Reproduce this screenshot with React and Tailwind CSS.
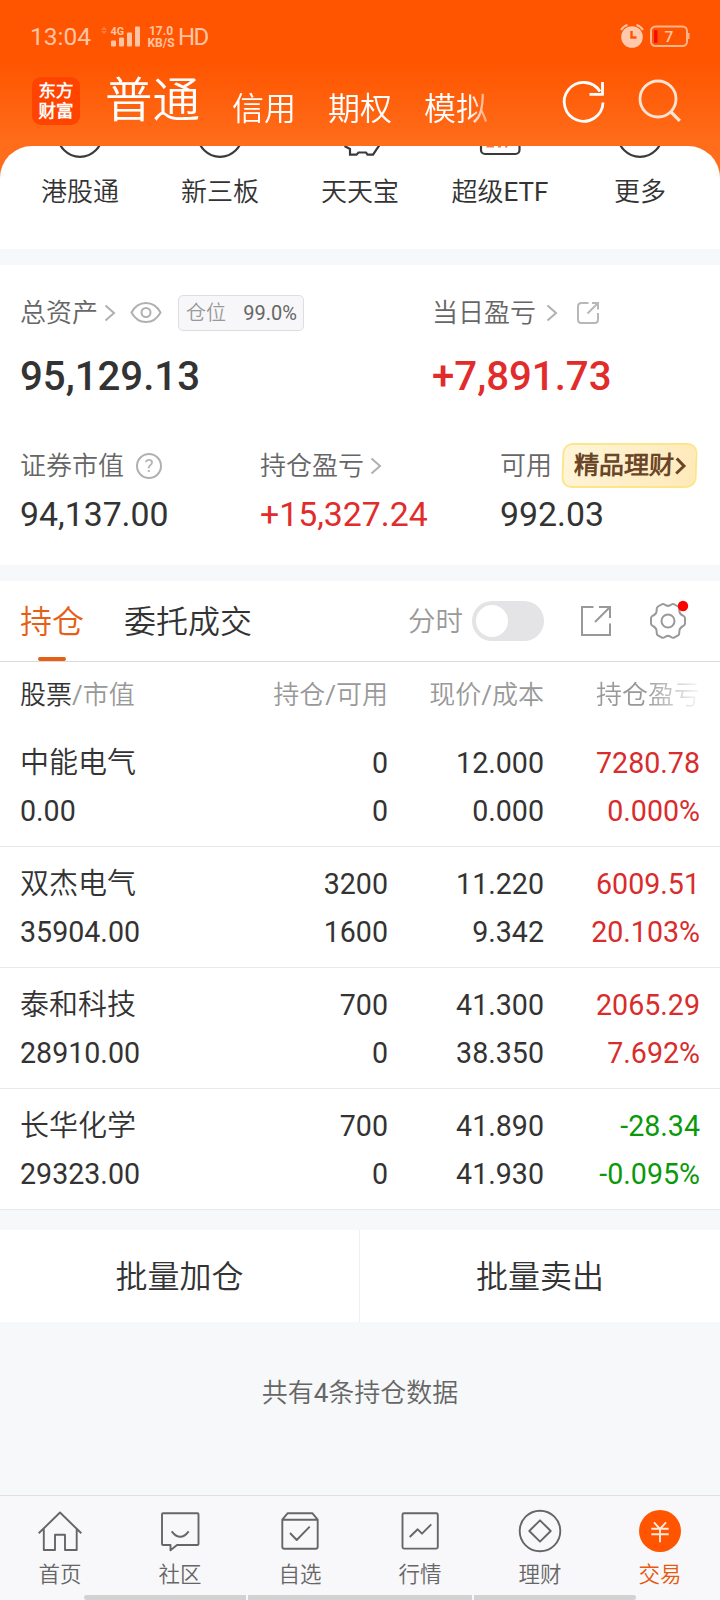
const ACTIONS = [
  { label: '港股通', icon: 'circle' },
  { label: '新三板', icon: 'circle' },
  { label: '天天宝', icon: 'pig' },
  { label: '超级ETF', icon: 'etf' },
  { label: '更多', icon: 'circle' },
];

const HOLDINGS = [
  { name: '中能电气', value: '0.00', held: '0', free: '0', price: '12.000', cost: '0.000', pnl: '7280.78', pct: '0.000%', up: true },
  { name: '双杰电气', value: '35904.00', held: '3200', free: '1600', price: '11.220', cost: '9.342', pnl: '6009.51', pct: '20.103%', up: true },
  { name: '泰和科技', value: '28910.00', held: '700', free: '0', price: '41.300', cost: '38.350', pnl: '2065.29', pct: '7.692%', up: true },
  { name: '长华化学', value: '29323.00', held: '700', free: '0', price: '41.890', cost: '41.930', pnl: '-28.34', pct: '-0.095%', up: false },
];

function Chevron({ className }) {
  return (
    <svg className={className} width="12" height="18" viewBox="0 0 12 18" fill="none" stroke="#b0b0b0" strokeWidth="2">
      <path d="M1.500 1.500 10 9l-8.500 7.500" />
    </svg>
  );
}

function StatusBar() {
  return (
    <div className="flex h-[72px] items-center pl-[30px] pr-[30px] pt-[1px] text-[#ffc4a4]">
      <span className="w-[64px] text-[24.500px] leading-[36px]">13:04</span>
      <svg className="ml-[6px]" width="42" height="26" viewBox="0 0 42 26" fill="currentColor">
        <path d="M4 2.500 7 6H1zM4 10 1 7h6z" opacity=".35" />
        <rect x="11" y="16.500" width="5" height="6" rx="1" />
        <rect x="19" y="13.500" width="5" height="9" rx="1" />
        <rect x="27" y="8.500" width="5" height="14" rx="1" />
        <rect x="35" y="2.500" width="5" height="20" rx="1" />
        <text x="10.500" y="10.500" fontSize="10.800" fontWeight="700" fontFamily="Roboto, sans-serif">4G</text>
      </svg>
      <div className="ml-[4px] flex w-[30px] flex-col items-center text-[12px] font-bold leading-[12px]">
        <span>17.0</span>
        <span>KB/S</span>
      </div>
      <span className="ml-[2px] text-[24px] leading-[36px] tracking-[-1.500px]">HD</span>
      <svg className="ml-auto" width="72" height="28" viewBox="0 0 72 28" fill="none">
        <circle cx="14" cy="14" r="10.800" fill="#ffc9ae" />
        <path d="M13.500 8v6.500h5" stroke="#ff5500" strokeWidth="2.400" />
        <path d="M3 7Q5.500 3 9.500 2M18.500 2Q22.500 3 25 7" stroke="#ffc4a4" strokeWidth="2" />
        <rect x="33" y="3.500" width="36" height="19.500" rx="4.500" stroke="#ffb48c" strokeWidth="2" />
        <path d="M69 10h2.500v6H69z" fill="#ffb48c" />
        <rect x="36" y="7" width="3.500" height="13" rx="1" fill="#f80b0b" />
        <text x="46.500" y="18.500" fontSize="15.500" fontWeight="500" fill="#ffc4a4" fontFamily="Roboto, sans-serif">7</text>
      </svg>
    </div>
  );
}

function Header() {
  return (
    <header className="h-[180px] bg-[linear-gradient(180deg,#ff5500_0px,#ff5500_62px,#ff6d1b_146px,#ff6d1b_180px)]">
      <StatusBar />
      <div className="flex h-[74px] items-start pl-8">
        <div className="mt-[5px] flex h-12 w-12 flex-col items-center justify-center rounded-[9px] bg-[#ff4400] text-[17.500px] font-bold leading-[20px] text-white">
          <span>东方</span>
          <span>财富</span>
        </div>
        <div className="ml-[25px] flex h-[70px] w-[390px] text-white [mask-image:linear-gradient(90deg,#000_365px,transparent_395px)]">
          <span className="mt-[2px] w-[95px] whitespace-nowrap text-[47.500px] leading-[54px]">普通</span>
          <span className="ml-[32px] mt-[17px] w-16 text-[32px] leading-[40px]">信用</span>
          <span className="ml-[32px] mt-[17px] w-16 text-[32px] leading-[40px]">期权</span>
          <span className="ml-[32px] mt-[17px] w-16 text-[32px] leading-[40px]">模拟</span>
        </div>
        <svg className="ml-[63px] mt-[4px]" width="52" height="52" viewBox="0 0 52 52" fill="none" stroke="#fff" strokeWidth="2.800">
          <path d="M45 26.500A19.400 19.400 0 1 1 42 15.500" />
          <path d="M44.500 6v12.300H31.500" />
        </svg>
        <svg className="ml-[24px] mt-[4px]" width="52" height="52" viewBox="0 0 52 52" fill="none" stroke="#ffe3d3" strokeWidth="2.800">
          <circle cx="24" cy="23" r="18" />
          <path d="m36.500 35.500 9.300 9.300" strokeWidth="3.200" />
        </svg>
      </div>
    </header>
  );
}

function ActionIcon({ kind }) {
  return (
    <svg width="60" height="14" viewBox="0 0 60 14" fill="none" stroke="#3a3a3a" strokeWidth="2.200">
      {kind === 'circle' && <circle cx="30" cy="-11.500" r="22.300" />}
      {kind === 'pig' && <path d="M14.500 0 20 3v5.700h6.500L28.500 6.500h7.500l1.500 2.200h5.500L49.500-1" />}
      {kind === 'etf' && (
        <>
          <rect x="11" y="-25" width="38.500" height="33" rx="4" />
          <path d="M16.500 0h7.500M28 0h3M35 0h2.500" stroke="#f4794a" strokeWidth="3" />
        </>
      )}
    </svg>
  );
}

function Actions() {
  return (
    <section className="-mt-[34px] flex h-[103px] overflow-hidden rounded-t-[32px] bg-white px-[10px]">
      {ACTIONS.map((a) => (
        <div key={a.label} className="flex w-[140px] flex-col items-center">
          <ActionIcon kind={a.icon} />
          <span className="mt-[14px] whitespace-nowrap text-[26px] leading-[36px]">{a.label}</span>
        </div>
      ))}
    </section>
  );
}

function Assets() {
  return (
    <section className="mt-4 h-[300px] bg-white px-5 pt-[29px] text-[#666]">
      <div className="flex">
        <div className="w-[412px]">
          <div className="flex h-[37px] items-center text-[26px] leading-[36px]">
            <span>总资产</span>
            <Chevron className="ml-[6px]" />
            <svg className="ml-[14px]" width="32" height="24" viewBox="0 0 32 24" fill="none" stroke="#b0b0b0" strokeWidth="2">
              <path d="M1.500 11.500C5 5 10.500 2 16 2S27 5 30.500 11.500C27 18 21.500 21 16 21S5 18 1.500 11.500z" />
              <circle cx="16" cy="11.500" r="4.500" />
            </svg>
            <div className="ml-[16px] flex h-9 w-[126px] items-center justify-between rounded-[5px] border border-[#dedee2] bg-[#f7f7fa] pl-[7px] pr-[6px] text-[20px] leading-[34px]">
              <span className="text-[#999]">仓位</span>
              <span>99.0%</span>
            </div>
          </div>
          <div className="mt-[22px] text-[40.200px] font-medium leading-[48px] text-[#333]">95,129.13</div>
        </div>
        <div>
          <div className="flex h-[37px] items-center text-[26px] leading-[36px]">
            <span>当日盈亏</span>
            <Chevron className="ml-[10px]" />
            <svg className="ml-[17px]" width="26" height="26" viewBox="0 0 26 26" fill="none" stroke="#b8b8b8" strokeWidth="2">
              <path d="M13.500 3H6.500Q3 3 3 6.500v13Q3 23 6.500 23h13Q23 23 23 19.500V13M12.500 13.500 23 3M17 3h6v6.500" />
            </svg>
          </div>
          <div className="mt-[22px] text-[40.200px] font-medium leading-[48px] text-[#e22c2c]">+7,891.73</div>
        </div>
      </div>
      <div className="mt-[41px] flex">
        <div className="w-[240px]">
          <div className="flex h-12 items-center text-[26px]">
            <span>证券市值</span>
            <span className="ml-[12px] flex h-[26px] w-[26px] items-center justify-center rounded-full border-2 border-[#b0b0b0] text-[19px] leading-[22px] text-[#b0b0b0]">?</span>
          </div>
          <div className="mt-[5px] text-[33.800px] leading-[40px] text-[#333]">94,137.00</div>
        </div>
        <div className="w-[240px]">
          <div className="flex h-12 items-center text-[26px]">
            <span>持仓盈亏</span>
            <Chevron className="ml-[6px]" />
          </div>
          <div className="mt-[5px] text-[33.800px] leading-[40px] text-[#e22c2c]">+15,327.24</div>
        </div>
        <div className="w-[200px]">
          <div className="flex h-12 items-center text-[26px]">
            <span className="whitespace-nowrap">可用</span>
            <div className="mb-[1px] ml-[10px] flex h-[45px] w-[135px] shrink-0 -skew-x-2 items-center rounded-[10px] border-2 border-[#fde68a] bg-[linear-gradient(110deg,#fff5da,#ffe9b8)] pl-[10px]">
              <span className="mt-[1px] whitespace-nowrap text-[25px] font-bold text-[#6b4528]">精品理财</span>
              <svg className="ml-[1px]" width="12" height="20" viewBox="0 0 12 20" fill="none" stroke="#6b4528" strokeWidth="3">
                <path d="m1.500 2.500 7.500 7.500-7.500 7.500" />
              </svg>
            </div>
          </div>
          <div className="mt-[5px] text-[33.800px] leading-[40px] text-[#333]">992.03</div>
        </div>
      </div>
    </section>
  );
}

function TabBar() {
  return (
    <div className="flex h-[81px] items-center border-b border-[#dcdcdc] pl-5">
      <div className="flex h-[80px] flex-col items-center text-[#e65f17]">
        <span className="h-[76px] text-[32px] leading-[82px]">持仓</span>
        <span className="h-1 w-7 rounded-full bg-[#e65f17]" />
      </div>
      <span className="ml-[40px] text-[32px] leading-[80px] pt-[2px]">委托成交</span>
      <span className="ml-[156px] pt-[2px] text-[27.500px] text-[#999]">分时</span>
      <span className="ml-[9px] flex h-10 w-[72px] items-center rounded-full bg-[#e4e4e6] pl-1">
        <span className="h-8 w-8 rounded-full bg-white" />
      </span>
      <svg className="ml-[35px]" width="34" height="34" viewBox="0 0 34 34" fill="none" stroke="#999" strokeWidth="2">
        <path d="M14.500 3H3v28h28V19.500M16 18 31 3M20 3H31v11" />
      </svg>
      <svg className="ml-[34px]" width="46" height="42" viewBox="0 0 46 42" fill="none" stroke="#999" strokeWidth="2">
        <path d="M14.500 4.500Q16 3.500 17.500 4.500 21 7.300 24.500 4.500 26 3.500 27.500 4.500L31 6.500Q32.500 7.500 32.300 9.500 32 14 36.200 15.700 38 16.500 38 18.500V23.500Q38 25 36.200 26 32 28 32.300 32.500 32.500 34.500 31 35.500L27.500 37.300Q26 38.300 24.500 37.200 21 34.500 17.500 37.200 16 38.300 14.500 37.300L11 35.500Q9.500 34.500 9.700 32.500 10 28 5.800 26 4 25 4 23.500V18.500Q4 16.500 5.800 15.700 10 14 9.700 9.500 9.500 7.500 11 6.500z" />
        <circle cx="21" cy="21" r="6.500" />
        <circle cx="36" cy="6" r="5.200" fill="#f00" stroke="none" />
      </svg>
    </div>
  );
}

function Holdings() {
  return (
    <section className="mt-4 bg-white">
      <TabBar />
      <div className="grid h-[64px] grid-cols-[212px_156px_156px_156px] items-center px-5 pt-[2px] text-right text-[26px] text-[#999]">
        <span className="text-left"><span className="text-[#333]">股票</span>/市值</span>
        <span>持仓/可用</span>
        <span>现价/成本</span>
        <span className="[mask-image:linear-gradient(90deg,#000_100px,transparent_160px)]">持仓盈亏</span>
      </div>
      {HOLDINGS.map((h) => (
        <div key={h.name} className="grid h-[121px] grid-cols-[212px_156px_156px_156px] border-b border-[#e8e8e8] px-5 pt-[13px] text-right text-[28.600px] leading-[48px]">
          <div className="flex flex-col text-left"><span className="text-[29px]">{h.name}</span><span>{h.value}</span></div>
          <div className="flex flex-col"><span>{h.held}</span><span>{h.free}</span></div>
          <div className="flex flex-col"><span>{h.price}</span><span>{h.cost}</span></div>
          <div className={h.up ? 'flex flex-col text-[#d92c2c]' : 'flex flex-col text-[#0b990b]'}><span>{h.pnl}</span><span>{h.pct}</span></div>
        </div>
      ))}
    </section>
  );
}

function NavIcon({ name }) {
  return (
    <svg width="48" height="48" viewBox="0 0 48 48" fill="none" stroke="#666" strokeWidth="1.900" strokeLinejoin="round">
      {name === '首页' && (
        <path d="M2.700 26.300 24 5.500l21.300 20.800M7.800 22v21h11.200V27.700h10V43h11.700V22" />
      )}
      {name === '社区' && (
        <path d="M7 6.300h34.500q1 0 1 1v29.700q0 1-1 1H21l-6.500 5.300V38H7q-1 0-1-1V7.300q0-1 1-1zM15.700 24.300q8.500 11 17 0" />
      )}
      {name === '自选' && (
        <path d="M6.300 12.700 11.500 6.300h25l5.200 6.400v27q0 2-2 2h-31.400q-2 0-2-2zH41.700M14 26l6.700 7 13-13.300" />
      )}
      {name === '行情' && (
        <>
          <rect x="6.500" y="6.300" width="35.300" height="35.300" rx="1.500" />
          <path d="m13.700 30 8-7.700 4.300 4.400 9.300-9.400" />
        </>
      )}
      {name === '理财' && (
        <>
          <circle cx="24" cy="24" r="20.300" />
          <path d="M24 13.300 34.700 24 24 34.700 13.300 24z" />
        </>
      )}
      {name === '交易' && (
        <>
          <circle cx="24" cy="24" r="21" fill="#ff5500" stroke="none" />
          <path d="m18 15.300 6 6.700 6-6.700M24 22v13.300M15.300 21.800h17.400M15.300 27.300h17.400" stroke="#ffe9dd" />
        </>
      )}
    </svg>
  );
}

function BottomNav() {
  return (
    <nav className="flex h-[105px] flex-col border-t border-[#dfe0e3] bg-[#f8f8fb]">
      <div className="flex h-[99px] pt-[11px]">
        {['首页', '社区', '自选', '行情', '理财', '交易'].map((n) => (
          <div key={n} className={n === '交易' ? 'flex w-[120px] flex-col items-center text-[#e8590c]' : 'flex w-[120px] flex-col items-center text-[#666]'}>
            <NavIcon name={n} />
            <span className="mt-[5px] text-[21.500px] leading-[30px]">{n}</span>
          </div>
        ))}
      </div>
      <div className="flex h-[5px] justify-center gap-[2px]">
        <span className="w-[162px] rounded-l-full bg-[#d2d2d2]" />
        <span className="w-[224px] bg-[#d2d2d2]" />
        <span className="w-[162px] rounded-r-full bg-[#d2d2d2]" />
      </div>
    </nav>
  );
}

export default function App() {
  return (
    <div className="flex h-[1600px] w-[720px] flex-col overflow-hidden bg-[#f7f8fa] font-[Roboto,'Noto_Sans_CJK_SC_DemiLight','Noto_Sans_CJK_SC',sans-serif] text-[#333]">
      <Header />
      <Actions />
      <Assets />
      <Holdings />
      <section className="mt-[20px] flex h-[92px] bg-white text-center text-[32px] leading-[94px]">
        <span className="w-[360px] border-r border-[#f0f0f2]">批量加仓</span>
        <span className="w-[360px]">批量卖出</span>
      </section>
      <p className="mt-[53px] grow text-center text-[26px] leading-[36px] text-[#666]">共有4条持仓数据</p>
      <BottomNav />
    </div>
  );
}
